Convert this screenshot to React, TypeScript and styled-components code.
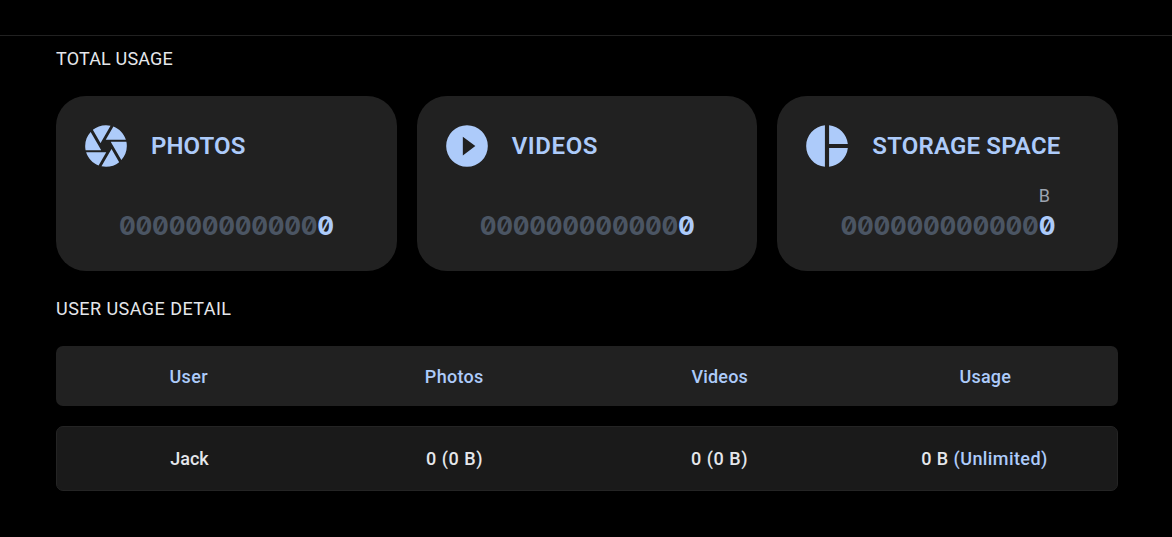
import type { ReactNode } from 'react';
import styled, { createGlobalStyle } from 'styled-components';

const irisPath =
  'M13.73,15L9.83,21.76C10.53,21.91 11.25,22 12,22C14.4,22 16.6,21.15 18.32,19.75L14.66,13.4M2.46,15C3.38,17.92 5.61,20.26 8.45,21.34L12.12,15M8.54,12L4.64,5.25C3,7 2,9.39 2,12C2,12.68 2.07,13.35 2.2,14H9.69M21.8,10H14.31L14.6,10.5L19.36,18.75C21,16.97 22,14.6 22,12C22,11.31 21.93,10.64 21.8,10M21.54,9C20.62,6.07 18.39,3.74 15.55,2.66L11.88,9M9.4,10.5L14.17,2.24C13.47,2.09 12.75,2 12,2C9.6,2 7.4,2.84 5.68,4.25L9.34,10.6L9.4,10.5Z';
const playPath =
  'M10,16.5V7.5L16,12M12,2A10,10 0 0,0 2,12A10,10 0 0,0 12,22A10,10 0 0,0 22,12A10,10 0 0,0 12,2Z';
const piePath =
  'M11,2V22C5.9,21.5 2,17.2 2,12C2,6.8 5.9,2.5 11,2M13,2V11H22C21.5,6.2 17.8,2.5 13,2M13,13V22C17.7,21.5 21.5,17.8 22,13H13Z';

interface StatsCardProps {
  icon: string;
  title: string;
  value: number;
  unit?: string;
  spacing?: number;
}

function StatsCard({ icon, title, value, unit, spacing = 0 }: StatsCardProps) {
  const digits = String(value);
  return (
    <Card>
      <CardHeader>
        <svg viewBox="0 0 24 24">
          <path d={icon} />
        </svg>
        <CardTitle $spacing={spacing}>{title}</CardTitle>
      </CardHeader>
      <Counter>
        <Zeros>{'0'.repeat(13 - digits.length)}</Zeros>
        <span>{digits}</span>
        {unit && <Unit>{unit}</Unit>}
      </Counter>
    </Card>
  );
}

function Cell({ children, spacing = 0 }: { children: ReactNode; spacing?: number }) {
  return (
    <TableCell>
      <CellText $spacing={spacing}>{children}</CellText>
    </TableCell>
  );
}

export default function App() {
  return (
    <>
      <GlobalStyle />
      <TopBar />
      <Content>
        <SectionTitle $spacing={0.17}>TOTAL USAGE</SectionTitle>
        <Cards>
          <StatsCard icon={irisPath} title="PHOTOS" value={0} spacing={0.1} />
          <StatsCard icon={playPath} title="VIDEOS" value={0} spacing={0.6} />
          <StatsCard icon={piePath} title="STORAGE SPACE" value={0} unit="B" spacing={0.18} />
        </Cards>
        <SectionTitle $spacing={0.46}>USER USAGE DETAIL</SectionTitle>
        <TableHead>
          <Cell spacing={0.4}>User</Cell>
          <Cell spacing={0.3}>Photos</Cell>
          <Cell spacing={0.15}>Videos</Cell>
          <Cell spacing={0.2}>Usage</Cell>
        </TableHead>
        <TableRow>
          <Cell>Jack</Cell>
          <Cell spacing={0.55}>0 (0 B)</Cell>
          <Cell spacing={0.55}>0 (0 B)</Cell>
          <Cell spacing={0.42}>
            0 B <Quota>(Unlimited)</Quota>
          </Cell>
        </TableRow>
      </Content>
    </>
  );
}

const GlobalStyle = createGlobalStyle`
  * {
    box-sizing: border-box;
  }
  body {
    margin: 0;
    background: #000;
    color: #e5e7eb;
    font-family: Roboto, 'Liberation Sans', sans-serif;
    font-size: 18px;
    font-weight: 500;
    overflow: hidden;
  }
`;

const TopBar = styled.header`
  height: 36px;
  border-bottom: 1px solid #212121;
`;

const Content = styled.main`
  width: 1062px;
  margin-left: 56px;
  padding-top: 10px;
`;

const SectionTitle = styled.h2<{ $spacing: number }>`
  margin: 0;
  font-size: 18px;
  font-weight: 400;
  line-height: 26px;
  letter-spacing: ${(p) => p.$spacing}px;
  white-space: nowrap;
`;

const Cards = styled.div`
  display: grid;
  grid-template-columns: repeat(3, 1fr);
  gap: 20px;
  margin: 24px 0 25px;
`;

const Card = styled.section`
  height: 175px;
  padding: 25px;
  border-radius: 30px;
  background: #212121;
  color: #adcbfa;
`;

const CardHeader = styled.div`
  display: flex;
  align-items: center;
  gap: 20px;
  height: 50px;
  svg {
    flex: none;
    width: 50px;
    height: 50px;
    fill: currentColor;
  }
`;

const CardTitle = styled.h3<{ $spacing: number }>`
  margin: 0;
  font-size: 24px;
  font-weight: 600;
  letter-spacing: ${(p) => p.$spacing}px;
  white-space: nowrap;
`;

const Counter = styled.div`
  position: relative;
  width: 214.5px;
  margin: 38px auto 0;
  font-family: Inter, 'DejaVu Sans Mono', monospace;
  font-size: 26px;
  font-weight: 700;
  font-feature-settings: 'zero' 1, 'tnum' 1;
  letter-spacing: -0.29px;
  line-height: 34px;
  white-space: nowrap;
`;

const Zeros = styled.span`
  color: #4b5563;
`;

const Unit = styled.span`
  position: absolute;
  top: -26px;
  right: 5px;
  color: #9ca3af;
  font-family: Roboto, sans-serif;
  font-size: 18px;
  font-weight: 400;
  letter-spacing: 0;
  line-height: 26px;
`;

const TableHead = styled.div`
  display: grid;
  grid-template-columns: repeat(4, 1fr);
  align-items: center;
  height: 60px;
  margin: 24px 0 20px;
  border-radius: 7px;
  background: #212121;
  color: #adcbfa;
`;

const TableRow = styled(TableHead)`
  height: 65px;
  margin: 0;
  border: 1px solid #242424;
  background: #1a1a1a;
  color: #e5e7eb;
`;

const TableCell = styled.div`
  text-align: center;
`;

const CellText = styled.span<{ $spacing: number }>`
  letter-spacing: ${(p) => p.$spacing}px;
  white-space: nowrap;
`;

const Quota = styled.span`
  color: #adcbfa;
`;
